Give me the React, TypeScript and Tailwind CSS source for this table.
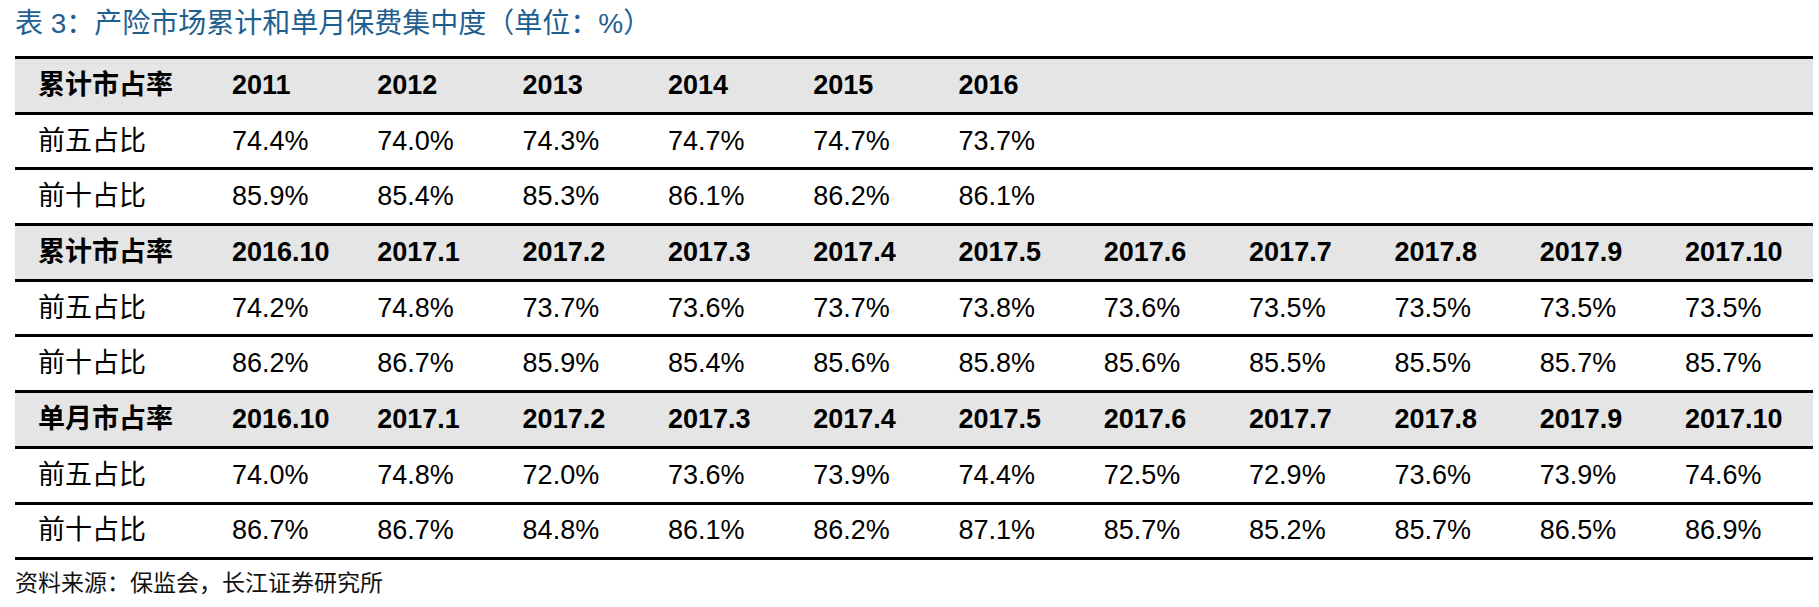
const sections = [
  {
    label: '累计市占率',
    cols: ['2011', '2012', '2013', '2014', '2015', '2016'],
    rows: [
      { name: '前五占比', values: ['74.4%', '74.0%', '74.3%', '74.7%', '74.7%', '73.7%'] },
      { name: '前十占比', values: ['85.9%', '85.4%', '85.3%', '86.1%', '86.2%', '86.1%'] },
    ],
  },
  {
    label: '累计市占率',
    cols: ['2016.10', '2017.1', '2017.2', '2017.3', '2017.4', '2017.5', '2017.6', '2017.7', '2017.8', '2017.9', '2017.10'],
    rows: [
      {
        name: '前五占比',
        values: ['74.2%', '74.8%', '73.7%', '73.6%', '73.7%', '73.8%', '73.6%', '73.5%', '73.5%', '73.5%', '73.5%'],
      },
      {
        name: '前十占比',
        values: ['86.2%', '86.7%', '85.9%', '85.4%', '85.6%', '85.8%', '85.6%', '85.5%', '85.5%', '85.7%', '85.7%'],
      },
    ],
  },
  {
    label: '单月市占率',
    cols: ['2016.10', '2017.1', '2017.2', '2017.3', '2017.4', '2017.5', '2017.6', '2017.7', '2017.8', '2017.9', '2017.10'],
    rows: [
      {
        name: '前五占比',
        values: ['74.0%', '74.8%', '72.0%', '73.6%', '73.9%', '74.4%', '72.5%', '72.9%', '73.6%', '73.9%', '74.6%'],
      },
      {
        name: '前十占比',
        values: ['86.7%', '86.7%', '84.8%', '86.1%', '86.2%', '87.1%', '85.7%', '85.2%', '85.7%', '86.5%', '86.9%'],
      },
    ],
  },
];

const font = "font-['Liberation_Sans','Noto_Sans_CJK_SC',sans-serif]";
// border-box: 高度里含 3px 下边框
const rowGrid = 'grid grid-cols-[217px_repeat(10,145.3px)_1fr] items-center h-[55.7px] border-b-[3px] border-black';

function Row({ head, cells, bold }: { head: string; cells: string[]; bold?: boolean }) {
  return (
    <div className={`${rowGrid} ${bold ? 'bg-[#e5e5e5] font-bold' : ''}`}>
      <div className="pl-[23px]">{head}</div>
      {cells.map((c, i) => (
        <div key={i}>{c}</div>
      ))}
    </div>
  );
}

export default function App() {
  return (
    <div className={`w-[1819px] h-[607px] bg-white pl-[15px] pr-[6px] ${font} text-black`}>
      {/* 标题 */}
      <div className="h-[56px] flex items-center pb-[8px] text-[28px] text-[#1f5f8f] whitespace-pre">
        表 3：产险市场累计和单月保费集中度（单位：%）
      </div>

      {/* 表格 */}
      <div className="border-t-[3px] border-black text-[27px] leading-none">
        {sections.map((s, si) => (
          <div key={si}>
            <Row head={s.label} cells={s.cols} bold />
            {s.rows.map((r) => (
              <Row key={r.name} head={r.name} cells={r.values} />
            ))}
          </div>
        ))}
      </div>

      <div className="h-[46px] flex items-center text-[23px] text-[#111]">
        资料来源：保监会，长江证券研究所
      </div>
    </div>
  );
}
